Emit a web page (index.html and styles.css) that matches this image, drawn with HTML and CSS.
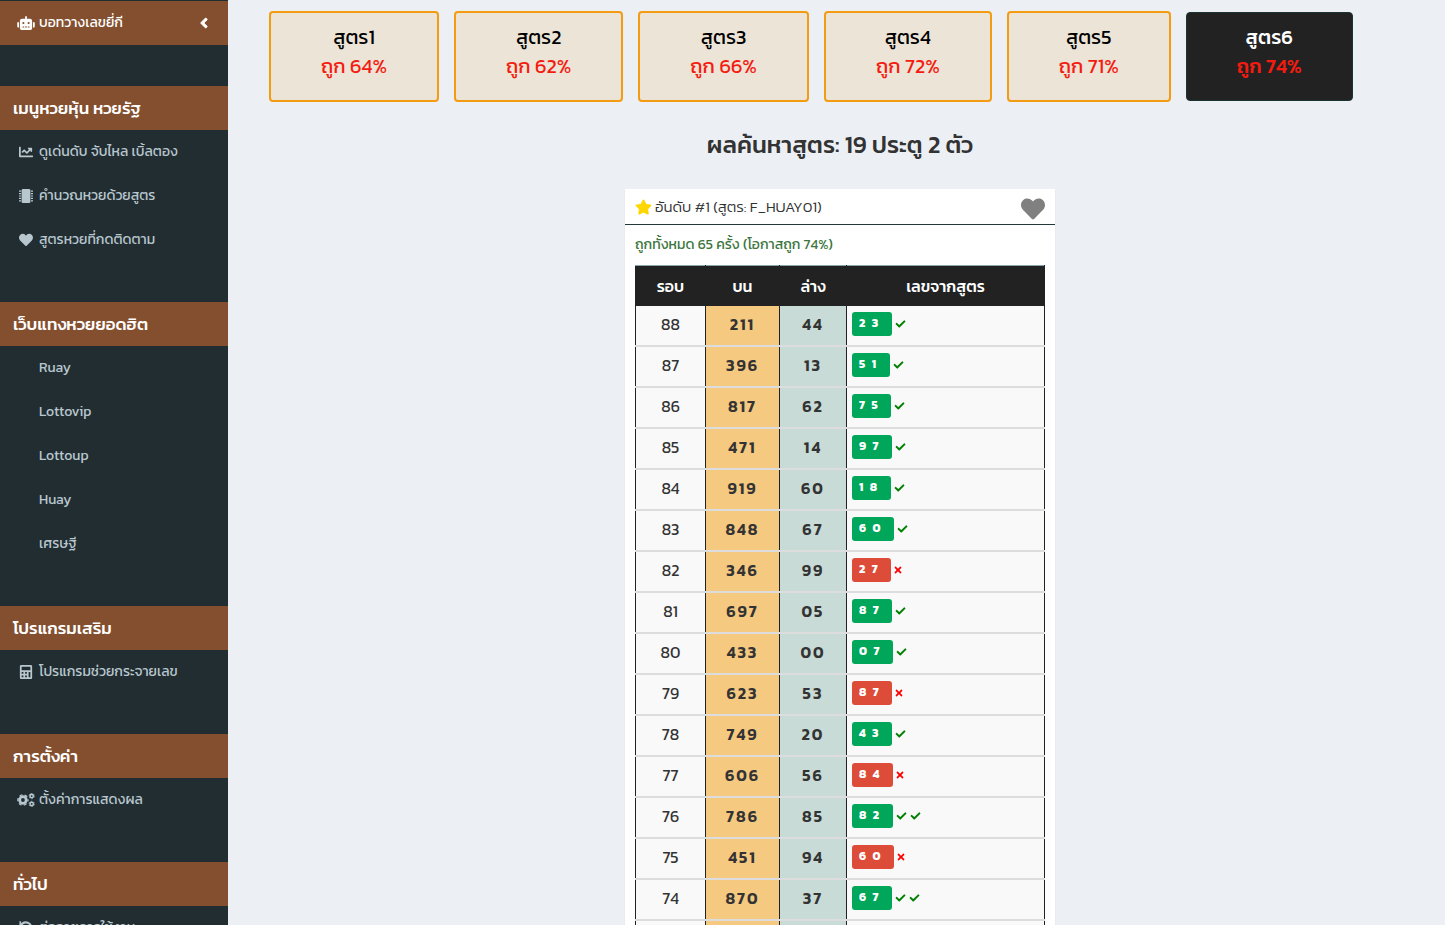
FILE: index.html
```html
<!DOCTYPE html>
<html lang="th">
<head>
<meta charset="utf-8">
<meta name="viewport" content="width=device-width, initial-scale=1">
<title>ผลค้นหาสูตร</title>
<link rel="stylesheet" href="styles.css">
</head>
<body>
<svg class="sprite" aria-hidden="true">
  <symbol id="robot" viewBox="0 0 640 512"><path d="M32,224H64V416H32A31.96,31.96,0,0,1,0,384V256A31.96,31.96,0,0,1,32,224Zm512-48V448a64.06,64.06,0,0,1-64,64H160a64.06,64.06,0,0,1-64-64V176a79.97,79.97,0,0,1,80-80H288V32a32,32,0,0,1,64,0V96H464A79.97,79.97,0,0,1,544,176ZM264,256a40,40,0,1,0-40,40A40,40,0,0,0,264,256Zm-8,128H192v32h64Zm96,0H288v32h64ZM456,256a40,40,0,1,0-40,40A40,40,0,0,0,456,256Zm-8,128H384v32h64ZM640,256V384a31.96,31.96,0,0,1-32,32H576V224h32A31.96,31.96,0,0,1,640,256Z"/></symbol>
  <symbol id="angle" viewBox="0 0 256 512"><path stroke="currentColor" stroke-width="24" d="M31.7 239l136-136c9.4-9.4 24.6-9.4 33.9 0l22.6 22.6c9.4 9.4 9.4 24.6 0 33.9L127.9 256l96.4 96.4c9.4 9.4 9.4 24.6 0 33.9L201.7 409c-9.4 9.4-24.6 9.4-33.9 0l-136-136c-9.5-9.4-9.5-24.6-.1-34z"/></symbol>
  <symbol id="chart" viewBox="0 0 512 512"><path d="M496 384H64V80c0-8.84-7.16-16-16-16H16C7.16 64 0 71.16 0 80v336c0 17.67 14.33 32 32 32h464c8.84 0 16-7.16 16-16v-32c0-8.84-7.16-16-16-16zM464 96H345.94c-21.38 0-32.09 25.85-16.97 40.97l32.4 32.4L288 242.75l-73.37-73.37c-12.5-12.5-32.76-12.5-45.25 0l-68.69 68.69c-6.25 6.25-6.25 16.38 0 22.63l22.62 22.62c6.25 6.25 16.38 6.25 22.63 0L192 237.25l73.37 73.37c12.5 12.5 32.76 12.5 45.25 0l96-96 32.4 32.4c15.12 15.12 40.97 4.41 40.97-16.97V112c.01-8.84-7.15-16-15.99-16z"/></symbol>
  <symbol id="chip" viewBox="0 0 512 512"><path d="M416 48v416c0 26.5-21.5 48-48 48H144c-26.5 0-48-21.5-48-48V48c0-26.5 21.5-48 48-48h224c26.5 0 48 21.5 48 48z"/><path d="M78 56v44H0V56zM78 144v44H0v-44zM78 234v44H0v-44zM78 324v44H0v-44zM78 412v44H0v-44zM434 56v44h78V56zM434 144v44h78v-44zM434 234v44h78v-44zM434 324v44h78v-44zM434 412v44h78v-44z"/></symbol>
  <symbol id="heart" viewBox="0 0 512 512"><path d="M462.3 62.6C407.5 15.9 326 24.3 275.7 76.2L256 96.5l-19.7-20.3C186.1 24.3 104.5 15.9 49.7 62.6c-62.8 53.6-66.1 149.8-9.9 207.9l193.5 199.8c12.5 12.9 32.8 12.9 45.3 0l193.5-199.8c56.3-58.1 53-154.3-9.8-207.9z"/></symbol>
  <symbol id="calc" viewBox="0 0 448 512"><path fill-rule="evenodd" d="M48 0h352c26 0 48 22 48 48v416c0 26-22 48-48 48H48c-26 0-48-22-48-48V48C0 22 22 0 48 0zM64 64v128h320V64zM64 256v64h64v-64zM192 256v64h64v-64zM320 256v192h64V256zM64 384v64h64v-64zM192 384v64h64v-64z"/></symbol>
  <symbol id="cogs" viewBox="0 0 640 512"><g fill="none" stroke="currentColor"><circle cx="208" cy="256" r="122" stroke-width="104"/><circle cx="208" cy="256" r="188" stroke-width="44" stroke-dasharray="110 86.9" stroke-dashoffset="55"/><circle cx="528" cy="112" r="62" stroke-width="56"/><circle cx="528" cy="112" r="98" stroke-width="26" stroke-dasharray="60 42.6"/><circle cx="528" cy="400" r="62" stroke-width="56"/><circle cx="528" cy="400" r="98" stroke-width="26" stroke-dasharray="60 42.6"/></g></symbol>
  <symbol id="undo" viewBox="0 0 512 512"><path d="M16 10h56v72A240 240 0 1 1 88 428l46-46A170 170 0 1 0 112 172h96v56H16z"/></symbol>
  <symbol id="star" viewBox="0 0 576 512"><path d="M259.3 17.8L194 150.2 47.9 171.5c-26.2 3.8-36.7 36.1-17.7 54.6l105.7 103-25 145.5c-4.5 26.3 23.2 46 46.4 33.7L288 439.6l130.7 68.7c23.2 12.2 50.9-7.4 46.4-33.7l-25-145.5 105.7-103c19-18.5 8.5-50.8-17.7-54.6L382 150.2 316.7 17.8c-11.7-23.6-45.6-23.9-57.4 0z"/></symbol>
  <symbol id="check" viewBox="0 0 512 512"><path d="M173.9 439.4l-166.4-166.4c-10-10-10-26.2 0-36.2l36.2-36.2c10-10 26.2-10 36.2 0L192 312.7 432.1 72.6c10-10 26.2-10 36.2 0l36.2 36.2c10 10 10 26.2 0 36.2l-294.4 294.4c-10 10-26.2 10-36.2 0z"/></symbol>
  <symbol id="times" viewBox="0 0 352 512"><path d="M242.72 256l100.07-100.07c12.28-12.28 12.28-32.19 0-44.48l-22.24-22.24c-12.28-12.28-32.19-12.28-44.48 0L176 189.28 75.93 89.21c-12.28-12.28-32.19-12.28-44.48 0L9.21 111.45c-12.28 12.28-12.28 32.19 0 44.48L109.28 256 9.21 356.07c-12.28 12.28-12.28 32.19 0 44.48l22.24 22.24c12.28 12.28 32.2 12.28 44.48 0L176 322.72l100.07 100.07c12.28 12.28 32.2 12.28 44.48 0l22.24-22.24c12.28-12.28 12.28-32.19 0-44.48L242.72 256z"/></symbol>
</svg>
<div class="shell">
  <nav class="sidebar">
    <a class="nav-link nav-top" href="#"><svg class="icon"><use href="#robot"/></svg><span>บอทวางเลขยี่กี</span><svg class="angle"><use href="#angle"/></svg></a>
    <section class="group">
      <h2 class="group-title">เมนูหวยหุ้น หวยรัฐ</h2>
      <a class="nav-link" href="#"><svg class="icon"><use href="#chart"/></svg><span>ดูเด่นดับ จับไหล เบิ้ลตอง</span></a>
      <a class="nav-link" href="#"><svg class="icon"><use href="#chip"/></svg><span>คำนวณหวยด้วยสูตร</span></a>
      <a class="nav-link" href="#"><svg class="icon"><use href="#heart"/></svg><span>สูตรหวยที่กดติดตาม</span></a>
    </section>
    <section class="group">
      <h2 class="group-title">เว็บแทงหวยยอดฮิต</h2>
      <a class="nav-link plain" href="#">Ruay</a>
      <a class="nav-link plain" href="#">Lottovip</a>
      <a class="nav-link plain" href="#">Lottoup</a>
      <a class="nav-link plain" href="#">Huay</a>
      <a class="nav-link plain" href="#">เศรษฐี</a>
    </section>
    <section class="group">
      <h2 class="group-title">โปรแกรมเสริม</h2>
      <a class="nav-link" href="#"><svg class="icon"><use href="#calc"/></svg><span>โปรแกรมช่วยกระจายเลข</span></a>
    </section>
    <section class="group">
      <h2 class="group-title">การตั้งค่า</h2>
      <a class="nav-link" href="#"><svg class="icon"><use href="#cogs"/></svg><span>ตั้งค่าการแสดงผล</span></a>
    </section>
    <section class="group">
      <h2 class="group-title">ทั่วไป</h2>
      <a class="nav-link" href="#"><svg class="icon"><use href="#undo"/></svg><span>ต่ออายุการใช้งาน</span></a>
    </section>
  </nav>
  <main class="content">
    <div class="formulas">
      <button class="formula" type="button">สูตร1<span class="rate">ถูก 64%</span></button>
      <button class="formula" type="button">สูตร2<span class="rate">ถูก 62%</span></button>
      <button class="formula" type="button">สูตร3<span class="rate">ถูก 66%</span></button>
      <button class="formula" type="button">สูตร4<span class="rate">ถูก 72%</span></button>
      <button class="formula" type="button">สูตร5<span class="rate">ถูก 71%</span></button>
      <button class="formula active" type="button">สูตร6<span class="rate">ถูก 74%</span></button>
    </div>
    <h1 class="title">ผลค้นหาสูตร: 19 ประตู 2 ตัว</h1>
    <article class="box">
      <header class="box-head">
        <svg class="star"><use href="#star"/></svg>
        <h2 class="box-title">อันดับ #1 (สูตร: F_HUAY01)</h2>
        <button class="fav" type="button" aria-label="ติดตาม"><svg><use href="#heart"/></svg></button>
      </header>
      <div class="box-body">
        <p class="summary">ถูกทั้งหมด 65 ครั้ง (โอกาสถูก 74%)</p>
        <table class="results">
          <thead><tr><th class="c-round">รอบ</th><th class="c-top">บน</th><th class="c-bottom">ล่าง</th><th>เลขจากสูตร</th></tr></thead>
          <tbody>
            <tr><td>88</td><td class="top">211</td><td class="bottom">44</td><td class="pick"><span class="tag">2 3 </span><svg class="hit"><use href="#check"/></svg></td></tr>
            <tr><td>87</td><td class="top">396</td><td class="bottom">13</td><td class="pick"><span class="tag">5 1 </span><svg class="hit"><use href="#check"/></svg></td></tr>
            <tr><td>86</td><td class="top">817</td><td class="bottom">62</td><td class="pick"><span class="tag">7 5 </span><svg class="hit"><use href="#check"/></svg></td></tr>
            <tr><td>85</td><td class="top">471</td><td class="bottom">14</td><td class="pick"><span class="tag">9 7 </span><svg class="hit"><use href="#check"/></svg></td></tr>
            <tr><td>84</td><td class="top">919</td><td class="bottom">60</td><td class="pick"><span class="tag">1 8 </span><svg class="hit"><use href="#check"/></svg></td></tr>
            <tr><td>83</td><td class="top">848</td><td class="bottom">67</td><td class="pick"><span class="tag">6 0 </span><svg class="hit"><use href="#check"/></svg></td></tr>
            <tr><td>82</td><td class="top">346</td><td class="bottom">99</td><td class="pick"><span class="tag lose">2 7 </span><svg class="miss"><use href="#times"/></svg></td></tr>
            <tr><td>81</td><td class="top">697</td><td class="bottom">05</td><td class="pick"><span class="tag">8 7 </span><svg class="hit"><use href="#check"/></svg></td></tr>
            <tr><td>80</td><td class="top">433</td><td class="bottom">00</td><td class="pick"><span class="tag">0 7 </span><svg class="hit"><use href="#check"/></svg></td></tr>
            <tr><td>79</td><td class="top">623</td><td class="bottom">53</td><td class="pick"><span class="tag lose">8 7 </span><svg class="miss"><use href="#times"/></svg></td></tr>
            <tr><td>78</td><td class="top">749</td><td class="bottom">20</td><td class="pick"><span class="tag">4 3 </span><svg class="hit"><use href="#check"/></svg></td></tr>
            <tr><td>77</td><td class="top">606</td><td class="bottom">56</td><td class="pick"><span class="tag lose">8 4 </span><svg class="miss"><use href="#times"/></svg></td></tr>
            <tr><td>76</td><td class="top">786</td><td class="bottom">85</td><td class="pick"><span class="tag">8 2 </span><svg class="hit"><use href="#check"/></svg><svg class="hit"><use href="#check"/></svg></td></tr>
            <tr><td>75</td><td class="top">451</td><td class="bottom">94</td><td class="pick"><span class="tag lose">6 0 </span><svg class="miss"><use href="#times"/></svg></td></tr>
            <tr><td>74</td><td class="top">870</td><td class="bottom">37</td><td class="pick"><span class="tag">6 7 </span><svg class="hit"><use href="#check"/></svg><svg class="hit"><use href="#check"/></svg></td></tr>
            <tr><td></td><td class="top"></td><td class="bottom"></td><td class="pick"></td></tr>
          </tbody>
        </table>
      </div>
    </article>
  </main>
</div>
</body>
</html>
```
FILE: styles.css
```css
*{box-sizing:border-box}
body{margin:0;background:#ecf0f5;color:#333;font-family:Kanit,"Noto Sans",sans-serif;font-size:14px;line-height:20px}
h1,h2,p{margin:0}
svg{fill:currentColor}
.sprite{position:absolute;width:0;height:0}
.shell{display:flex;height:100vh;overflow:hidden}

.sidebar{flex:0 0 228px;padding-top:1px;background:#222d32}
.nav-link{display:flex;align-items:center;gap:3px;height:44px;padding:0 16px;color:#b8c7ce;text-decoration:none}
.nav-link.plain{padding-left:39px}
.nav-top{background:#834f2f;color:#fff}
.icon{width:20px;height:14px;flex:none}
.angle{width:8px;height:16px;margin-left:auto;margin-right:4px}
.group{margin-top:40px}
.nav-top+.group{margin-top:41px}
.group-title{height:44px;padding:0 13px;background:#834f2f;color:#fff;font-size:17px;font-weight:500;line-height:44px}

.content{flex:1;min-width:0;padding:11px 0 0 7px}
.formulas{display:flex;align-items:center;gap:15px;padding-left:34px}
.formula{padding:10px 50px 19px;border:2px solid #f39c12;border-radius:4px;background:#ece4d7;color:#000;font:400 20px/29px Kanit,"Noto Sans",sans-serif;text-align:center}
.formula.active{border:1px solid #1a3431;background:#222;color:#fff;font-weight:500}
.rate{display:block;color:#f41c10}
.title{margin:26px 0 27px;text-align:center;font-size:24px;font-weight:500;line-height:34px}

.box{width:430px;margin:0 auto;background:#fff;box-shadow:0 1px 1px rgba(0,0,0,.1)}
.box-head{display:flex;align-items:center;gap:3px;height:36px;padding:0 10px;border-bottom:1px solid #22383a}
.star{width:17px;height:16px;color:#ffd700}
.box-title{padding-top:1px;font-size:15px;font-weight:300}
.fav{margin-left:auto;padding:4px 0 0;border:0;background:none;color:#808080;line-height:0}
.fav svg{width:24px;height:24px}
.box-body{padding:10px}
.summary{margin-bottom:10px;color:#3c763d;font-weight:400}
.results{width:100%;table-layout:fixed;border-collapse:collapse;font-size:16px;text-align:center}
.results th{height:40px;padding:0;border:1px solid #222;border-top-color:#8aa4af;background:#222;color:#fff;font-weight:500}
.c-round{width:70px}
.c-top{width:74px}
.c-bottom{width:67px}
.results td{height:41px;padding:0 5px 2px;border:1px solid #222;border-top:2px solid #ddd;border-bottom:2px solid #ddd;background:#f9f9f9;font-weight:400}
.results tbody tr:first-child td{height:40px;border-top:0}
.results td.top,.results td.bottom{font-weight:600;letter-spacing:2px}
.results td.top{background:#f6c981}
.results td.bottom{background:#c8dbd6}
.results .pick{text-align:left;line-height:0}
.tag{display:inline-block;height:24px;padding:0 7px;border-radius:3px;background:#00a65a;color:#fff;font-size:12px;font-weight:700;line-height:22px;letter-spacing:2px;white-space:pre;vertical-align:middle}
.tag.lose{background:#dd4b39}
.hit,.miss{height:10px;margin-left:3px;vertical-align:middle}
.hit{width:11px;color:green}
.miss{width:8px;color:red}
```
